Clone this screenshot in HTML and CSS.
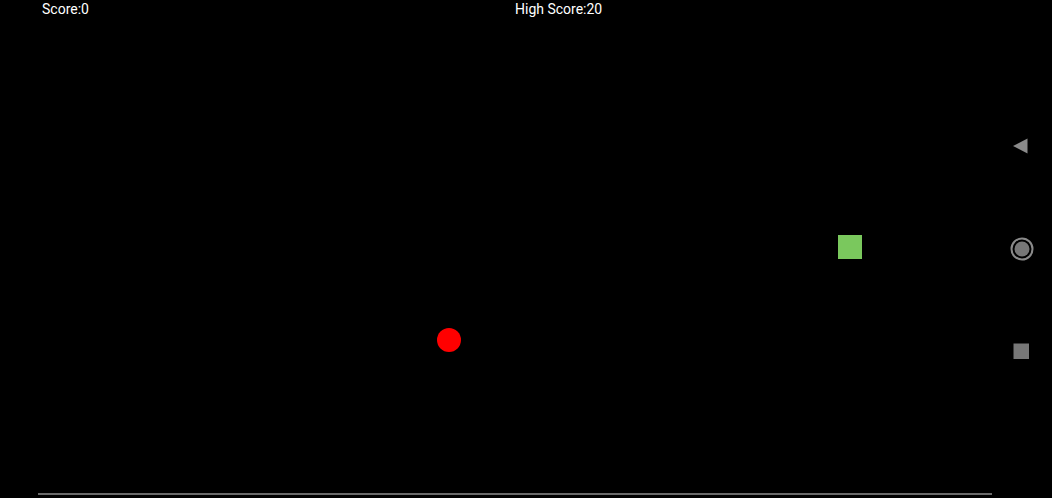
FILE: index.html
```html
<!DOCTYPE html>
<html>
<head>
<meta charset="utf-8">
<link rel="stylesheet" href="styles.css">
</head>
<body>
<div class="screen">
  <div class="game">
    <div class="hud">
      <span class="score">Score:0</span>
      <span class="high">High Score:20</span>
    </div>
    <div class="field">
      <div class="food"></div>
      <div class="ball"></div>
    </div>
    <div class="baseline"></div>
  </div>
  <div class="navbar">
    <svg class="nav-icon back" width="18" height="18" viewBox="0 0 18 18"><polygon points="2,9 16.5,1.5 16.5,16.5" fill="#8a8a8a"/></svg>
    <svg class="nav-icon home" width="26" height="26" viewBox="0 0 26 26"><circle cx="13" cy="13" r="10.5" fill="none" stroke="#8a8a8a" stroke-width="2"/><circle cx="13" cy="13" r="7.5" fill="#777"/></svg>
    <svg class="nav-icon recent" width="18" height="18" viewBox="0 0 18 18"><rect x="1.5" y="1.5" width="15.5" height="15.5" fill="#777"/></svg>
  </div>
</div>
</body>
</html>
```
FILE: styles.css
```css
html, body {
  margin: 0;
  padding: 0;
  background: #000;
}
.screen {
  width: 1052px;
  height: 498px;
  display: flex;
  background: #000;
  overflow: hidden;
}
.game {
  width: 1000px;
  height: 498px;
  display: flex;
  flex-direction: column;
}
.hud {
  height: 19px;
  display: flex;
  font-family: Roboto, "Liberation Sans", sans-serif;
  font-size: 14px;
  color: #fff;
  line-height: 18px;
}
.score {
  margin-left: 42px;
  width: 473px;
}
.field {
  position: relative;
  flex: 1;
}
.food {
  position: absolute;
  left: 838px;
  top: 216px;
  width: 24px;
  height: 24px;
  background: #7ac85d;
}
.ball {
  position: absolute;
  left: 437px;
  top: 309px;
  width: 24px;
  height: 24px;
  border-radius: 50%;
  background: #ff0000;
}
.baseline {
  margin: 0 8px 3px 38px;
  height: 2px;
  background: #6a6a6a;
}
.navbar {
  width: 52px;
  display: flex;
  flex-direction: column;
  align-items: flex-start;
  padding-top: 137px;
}
.nav-icon {
  display: block;
  flex: none;
}
.back {
  margin-left: 11px;
}
.home {
  margin-top: 81px;
  margin-left: 9px;
}
.recent {
  margin-top: 80px;
  margin-left: 12px;
}
```
